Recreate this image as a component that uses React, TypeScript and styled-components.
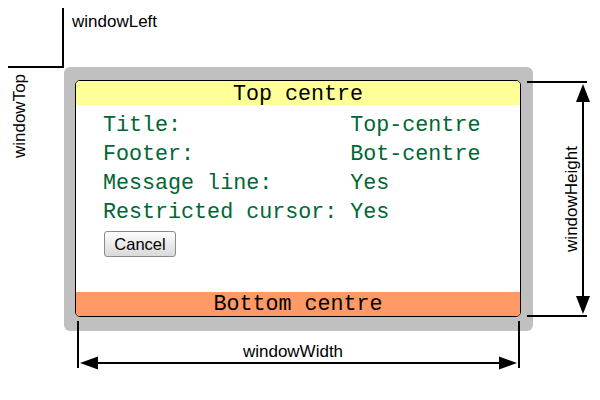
import React from "react";
import styled, { createGlobalStyle } from "styled-components";

const Global = createGlobalStyle`
  html, body { margin: 0; padding: 0; background: #ffffff; }
  body { font-family: "Liberation Sans", Arial, sans-serif; }
`;

const Stage = styled.div`
  position: relative;
  width: 600px;
  height: 400px;
  overflow: hidden;
  background: #ffffff;
  padding: 67px 0 0 64px;
  box-sizing: border-box;
`;

const Frame = styled.div`
  width: 469px;
  height: 264px;
  box-sizing: border-box;
  padding: 13px 12px 14px 11px;
  background: #c0c0c0;
  border-radius: 6px;
`;

const Win = styled.div`
  height: 100%;
  box-sizing: border-box;
  border: 1px solid #000;
  border-radius: 5px;
  background: #ffffff;
  overflow: hidden;
  display: flex;
  flex-direction: column;
  font-family: "Liberation Mono", "DejaVu Sans Mono", monospace;
  font-size: 21.7px;
`;

const Bar = styled.div<{ $bg: string; $lh: number }>`
  flex: 0 0 24px;
  height: 24px;
  background: ${(p) => p.$bg};
  color: #000;
  text-align: center;
  line-height: ${(p) => p.$lh}px;
  white-space: pre;
`;

const Body = styled.div`
  flex: 1;
  padding: 6px 0 0 27px;
  color: #006633;
`;

const Grid = styled.div`
  display: grid;
  grid-template-columns: max-content max-content;
  column-gap: 1ch;
  line-height: 29px;
`;

const Cell = styled.div`
  white-space: pre;
`;

const Button = styled.button`
  margin: 4px 0 0 1px;
  width: 72px;
  height: 26px;
  box-sizing: border-box;
  border: 1px solid #8a8a8a;
  border-radius: 3px;
  background: linear-gradient(#fdfdfd, #d9d9d9);
  font-family: "Liberation Sans", Arial, sans-serif;
  font-size: 16.5px;
  color: #000;
  padding: 0;
`;

const Overlay = styled.svg`
  position: absolute;
  left: 0;
  top: 0;
  width: 600px;
  height: 400px;
  pointer-events: none;
`;

const Label = styled.text`
  font-family: "Liberation Sans", Arial, sans-serif;
  font-size: 17px;
  fill: #000;
`;

const rows: [string, string][] = [
  ["Title:", "Top-centre"],
  ["Footer:", "Bot-centre"],
  ["Message line:", "Yes"],
  ["Restricted cursor:", "Yes"],
];

export default function App() {
  return (
    <>
      <Global />
      <Stage>
        <Frame>
          <Win>
            <Bar $bg="#ffff99" $lh={28}>Top centre</Bar>
            <Body>
              <Grid>
                {rows.map(([k, v]) => (
                  <React.Fragment key={k}>
                    <Cell>{k}</Cell>
                    <Cell>{v}</Cell>
                  </React.Fragment>
                ))}
              </Grid>
              <Button>Cancel</Button>
            </Body>
            <Bar $bg="#ff9966" $lh={26}>Bottom centre</Bar>
          </Win>
        </Frame>
        <Overlay viewBox="0 0 600 400">
          <g stroke="#000" strokeWidth={2} fill="none">
            <path d="M63 8 V67 H8" />
            <path d="M527 82 H587 M527 316 H587" />
            <path d="M583 98 V300" />
            <path d="M78 321 V368 M519 321 V368" />
            <path d="M94 363 H504" />
          </g>
          <g fill="#000">
            <polygon points="583,84 576,102 590,102" />
            <polygon points="583,314 576,296 590,296" />
            <polygon points="80,363 98,356.5 98,369.5" />
            <polygon points="517,363 499,356.5 499,369.5" />
          </g>
          <Label x={72} y={27}>windowLeft</Label>
          <Label x={293} y={357} textAnchor="middle">windowWidth</Label>
          <Label transform="translate(25,116) rotate(-90)" textAnchor="middle">windowTop</Label>
          <Label transform="translate(577,199) rotate(-90)" textAnchor="middle">windowHeight</Label>
        </Overlay>
      </Stage>
    </>
  );
}
